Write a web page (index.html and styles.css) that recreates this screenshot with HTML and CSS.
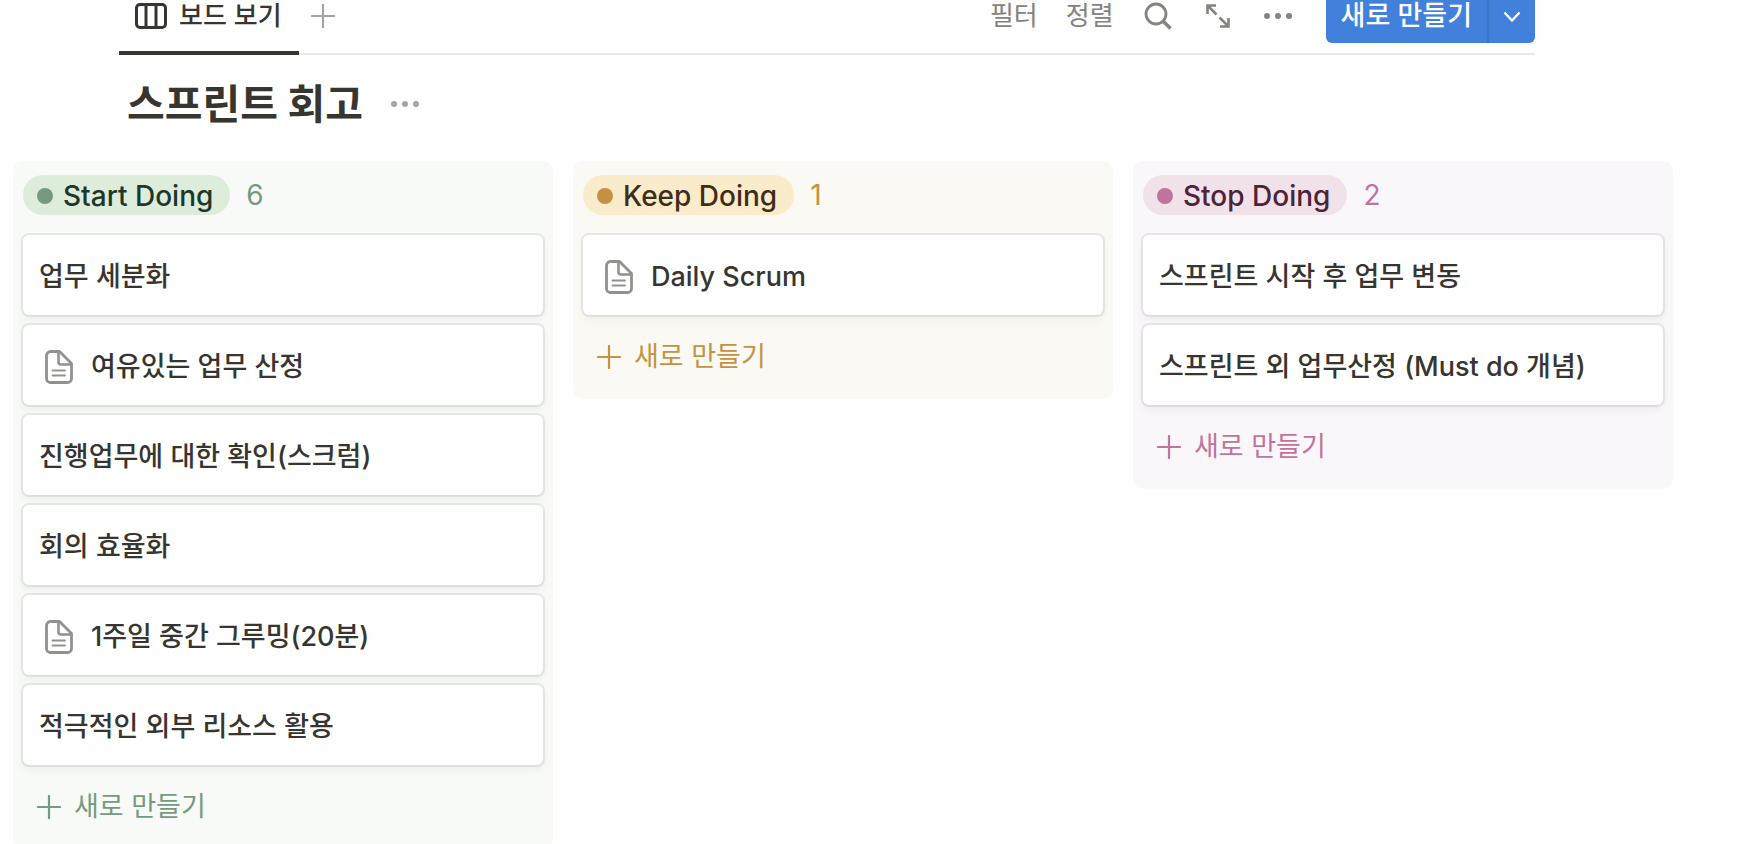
FILE: index.html
```html
<!DOCTYPE html>
<html lang="ko">
<head>
  <meta charset="UTF-8" />
  <meta name="viewport" content="width=device-width, initial-scale=1.0" />
  <title>스프린트 회고</title>
  <link rel="stylesheet" href="styles.css">
</head>
<body>
  <!-- shared icons -->
  <svg class="defs" width="0" height="0" aria-hidden="true">
    <symbol id="plus" viewBox="0 0 24 24">
      <path d="M12 1v22M1 12h22" fill="none" stroke="currentColor" stroke-width="2.200" stroke-linecap="round" />
    </symbol>
    <symbol id="dots" viewBox="0 0 28 8">
      <g fill="currentColor"><circle cx="3" cy="4" r="3" /><circle cx="14" cy="4" r="3" /><circle cx="25" cy="4" r="3" /></g>
    </symbol>
    <symbol id="page" viewBox="0 0 28 34">
      <path d="M5.500 1.500H14.500L26.500 13.500V28.500a4 4 0 0 1-4 4h-17a4 4 0 0 1-4-4v-23a4 4 0 0 1 4-4z" fill="none" stroke="currentColor" stroke-width="2.800" stroke-linejoin="round" />
      <path d="M13.500 2v10a2.500 2.500 0 0 0 2.500 2.500h10" fill="none" stroke="currentColor" stroke-width="2.600" />
      <path d="M7.500 20.500h12.500M7.500 25.500h12.500" fill="none" stroke="currentColor" stroke-width="1.800" stroke-linecap="round" />
    </symbol>
  </svg>

  <header class="toolbar">
    <nav class="tabs">
      <button class="tab active">
        <svg width="32" height="26" viewBox="0 0 32 26" fill="none" stroke="currentColor" stroke-width="3">
          <rect x="1.500" y="1.500" width="29" height="23" rx="3.500" />
          <path d="M11 2v22M21 2v22" />
        </svg>
        보드 보기
      </button>
      <button class="add-view" aria-label="보기 추가"><svg width="24" height="24"><use href="#plus" /></svg></button>
    </nav>
    <div class="actions">
      <div class="options">
        <button>필터</button>
        <button>정렬</button>
      </div>
      <div class="icons">
        <button aria-label="검색">
          <svg width="28" height="28" viewBox="0 0 28 28" fill="none" stroke="currentColor" stroke-width="2.800">
            <circle cx="12" cy="12" r="10" />
            <path d="M19 19l7.500 7.500" stroke-width="3.600" />
          </svg>
        </button>
        <button aria-label="확대">
          <svg width="24" height="26" viewBox="0 0 24 26" fill="none" stroke="currentColor" stroke-width="2.600">
            <path d="M1.500 11V2.500H10M2 3l8.500 8.500M22.500 15v8.500H14M22 23l-8.500-8.500" />
          </svg>
        </button>
        <button aria-label="더 보기"><svg width="28" height="8"><use href="#dots" /></svg></button>
      </div>
      <div class="split">
        <button class="new">새로 만들기</button>
        <button class="caret" aria-label="템플릿">
          <svg width="18" height="12" viewBox="0 0 18 12" fill="none" stroke="currentColor" stroke-width="2.400">
            <path d="M1.500 1.500L9 9.500l7.500-8" />
          </svg>
        </button>
      </div>
    </div>
  </header>

  <div class="title">
    <h1>스프린트 회고</h1>
    <button aria-label="더 보기"><svg width="28" height="8"><use href="#dots" /></svg></button>
  </div>

  <main class="board">
    <section class="column green">
      <div class="column-head">
        <h2 class="pill">Start Doing</h2>
        <span class="count">6</span>
      </div>
      <div class="cards">
        <a class="card" href="#">업무 세분화</a>
        <a class="card" href="#"><svg class="page-icon" width="28" height="34"><use href="#page" /></svg>여유있는 업무 산정</a>
        <a class="card" href="#">진행업무에 대한 확인(스크럼)</a>
        <a class="card" href="#">회의 효율화</a>
        <a class="card" href="#"><svg class="page-icon" width="28" height="34"><use href="#page" /></svg>1주일 중간 그루밍(20분)</a>
        <a class="card" href="#">적극적인 외부 리소스 활용</a>
      </div>
      <button class="add-card"><svg width="24" height="24"><use href="#plus" /></svg>새로 만들기</button>
    </section>

    <section class="column yellow">
      <div class="column-head">
        <h2 class="pill">Keep Doing</h2>
        <span class="count">1</span>
      </div>
      <div class="cards">
        <a class="card" href="#"><svg class="page-icon" width="28" height="34"><use href="#page" /></svg>Daily Scrum</a>
      </div>
      <button class="add-card"><svg width="24" height="24"><use href="#plus" /></svg>새로 만들기</button>
    </section>

    <section class="column pink">
      <div class="column-head">
        <h2 class="pill">Stop Doing</h2>
        <span class="count">2</span>
      </div>
      <div class="cards">
        <a class="card" href="#">스프린트 시작 후 업무 변동</a>
        <a class="card" href="#">스프린트 외 업무산정 (Must do 개념)</a>
      </div>
      <button class="add-card"><svg width="24" height="24"><use href="#plus" /></svg>새로 만들기</button>
    </section>
  </main>
</body>
</html>
```
FILE: styles.css
```css
* {
  box-sizing: border-box;
}
body {
  margin: 0;
  height: 100vh;
  overflow: hidden;
  background: #fff;
  color: #37352f;
  font-family: Inter, "Noto Sans CJK KR", sans-serif;
  font-size: 27px;
  line-height: 40px;
}
button {
  display: flex;
  align-items: center;
  padding: 0;
  border: none;
  background: none;
  color: inherit;
  font: inherit;
  line-height: 30px;
  white-space: nowrap;
  cursor: pointer;
}
.defs {
  display: block;
}

/* toolbar */
.toolbar {
  display: flex;
  justify-content: space-between;
  height: 67px;
  margin: -12px 209px 0 119px;
  border-bottom: 2px solid #e9e9e7;
}
.tabs {
  display: flex;
}
.tab {
  gap: 12px;
  height: 67px;
  padding: 0 17px 8px 16px;
  font-size: 26px;
  font-weight: 500;
}
.tab.active {
  border-bottom: 4px solid #37352f;
}
.add-view {
  height: 55px;
  padding: 0 12px;
  color: #a5a4a0;
}
.actions {
  display: flex;
  gap: 30px;
  height: 55px;
  color: #84837e;
}
.options {
  display: flex;
  gap: 28px;
  font-size: 26px;
}
.icons {
  display: flex;
  gap: 34px;
  padding-right: 4px;
}
.split {
  display: flex;
  overflow: hidden;
  border-radius: 6px;
  background: #4180db;
  color: #fff;
}
.new {
  padding: 0 15px;
  font-weight: 500;
}
.caret {
  padding: 2px 14px 0;
  border-left: 2px solid #3a74c8;
}

/* page title */
.title {
  display: flex;
  align-items: center;
  gap: 28px;
  height: 98px;
  padding: 0 127px;
}
.title h1 {
  margin: 0;
  font-size: 41px;
  font-weight: 700;
}
.title button {
  color: #a5a4a0;
}

/* board */
.board {
  display: grid;
  grid-template-columns: repeat(3, 1fr);
  align-items: start;
  gap: 20px;
  margin-top: 8px;
  padding: 0 71px 0 13px;
}
.column {
  padding: 14px 10px;
  border-radius: 10px;
}
.column-head {
  display: flex;
  align-items: center;
  gap: 16px;
  margin-bottom: 20px;
  font-size: 28px;
}
.pill {
  display: flex;
  align-items: center;
  gap: 10px;
  margin: 0;
  padding: 2px 17px 0 14px;
  border-radius: 20px;
  font-size: 28px;
  font-weight: 500;
  line-height: 38px;
}
.pill::before {
  content: "";
  width: 16px;
  height: 16px;
  border-radius: 50%;
}
.cards {
  display: grid;
  gap: 10px;
}
.card {
  display: flex;
  align-items: center;
  gap: 18px;
  height: 80px;
  padding: 4px 16px 0;
  border-radius: 6px;
  background: #fff;
  box-shadow: 0 0 0 2px rgba(15, 15, 15, 0.07), 0 4px 8px rgba(15, 15, 15, 0.06);
  color: inherit;
  font-weight: 500;
  text-decoration: none;
}
.page-icon {
  margin-left: 6px;
  color: #91918e;
}
.add-card {
  gap: 13px;
  width: 100%;
  height: 64px;
  margin: 6px 0 0;
  padding: 8px 14px 0;
}

.green {
  background: #f8faf7;
}
.green .pill {
  background: #deecdc;
  color: #1c3829;
}
.green .pill::before {
  background: #769a7f;
}
.green .count,
.green .add-card {
  color: #769a7f;
}
.yellow {
  background: #fbf9f4;
}
.yellow .pill {
  background: #faecca;
  color: #402c1b;
}
.yellow .pill::before {
  background: #c39343;
}
.yellow .count,
.yellow .add-card {
  color: #c39343;
}
.pink {
  background: #faf7fb;
}
.pink .pill {
  background: #f1e1e9;
  color: #4c2337;
}
.pink .pill::before {
  background: #c1749b;
}
.pink .count,
.pink .add-card {
  color: #c1749b;
}
```
